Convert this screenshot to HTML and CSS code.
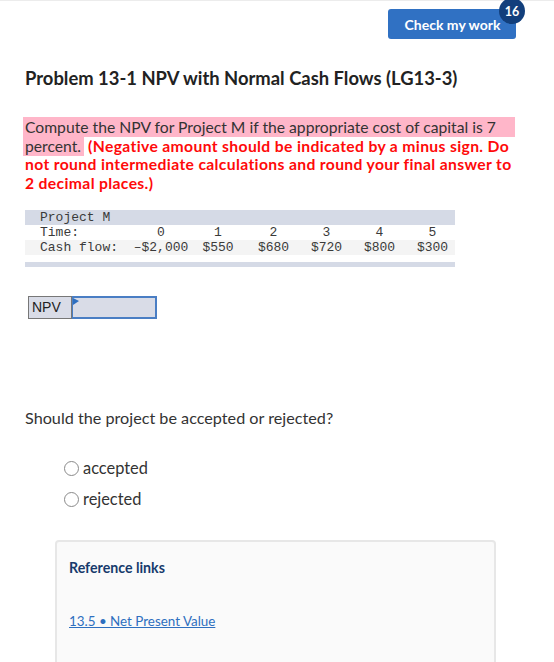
FILE: index.html
```html
<!DOCTYPE html>
<html>
<head>
<meta charset="utf-8">
<link rel="stylesheet" href="styles.css">
</head>
<body>
<div class="page">
  <div class="topbar">
    <button class="check">Check my work<span class="badge">16</span></button>
  </div>
  <h1 class="title">Problem 13-1 NPV with Normal Cash Flows (LG13-3)</h1>
  <p class="prompt"><span class="hl">Compute the NPV for Project M if the appropriate cost of capital is 7&nbsp;&nbsp;&nbsp;&nbsp; percent.</span> <strong class="red">(Negative amount should be indicated by a minus sign. Do not round intermediate calculations and round your final answer to 2 decimal places.)</strong></p>
  <div class="cf">
    <div class="cf-row cf-head"><span class="cf-label">Project M</span></div>
    <div class="cf-row">
      <span class="cf-label">Time:</span>
      <span>0</span><span>1</span><span>2</span><span>3</span><span>4</span><span>5</span>
    </div>
    <div class="cf-row cf-alt">
      <span class="cf-label">Cash flow:</span>
      <span>&ndash;$2,000</span><span>$550</span><span>$680</span><span>$720</span><span>$800</span><span>$300</span>
    </div>
    <div class="cf-foot"></div>
  </div>
  <div class="npv">
    <span class="npv-label">NPV</span>
    <span class="npv-input"><span class="flag"></span></span>
  </div>
  <p class="question">Should the project be accepted or rejected?</p>
  <div class="options">
    <label class="opt"><span class="radio"></span>accepted</label>
    <label class="opt"><span class="radio"></span>rejected</label>
  </div>
  <div class="refs">
    <div class="refs-title">Reference links</div>
    <a class="refs-link" href="#">13.5 &bull; Net Present Value</a>
  </div>
</div>
</body>
</html>
```
FILE: styles.css
```css
* { box-sizing: border-box; }
html, body { margin: 0; padding: 0; background: #fff; }
body {
  font-family: Lato, "Open Sans", sans-serif;
  color: #333;
  overflow: hidden;
  height: 662px;
}
.page {
  border-top: 1px solid #ececec;
  padding-left: 25px;
}
.topbar {
  display: flex;
  justify-content: flex-end;
  padding-top: 8px;
  padding-right: 38px;
}
.check {
  position: relative;
  width: 128px;
  height: 30px;
  border: none;
  border-radius: 3px;
  background: #3071c3;
  color: #fff;
  font-family: Lato, sans-serif;
  font-weight: 700;
  font-size: 14px;
  padding: 0 0 0 1px;
  text-align: center;
}
.badge {
  position: absolute;
  right: -9px;
  top: -11px;
  width: 26px;
  height: 26px;
  border-radius: 50%;
  background: #123f7c;
  color: #fff;
  font-size: 12.5px;
  font-weight: 700;
  display: flex;
  align-items: center;
  justify-content: center;
}
.title {
  margin: 27px 0 0 0;
  font-size: 18.4px;
  line-height: 25px;
  font-weight: 700;
  color: #222;
}
.prompt {
  margin: 27px 0 0 0;
  width: 494px;
  font-size: 15.7px;
  line-height: 18.5px;
}
.hl {
  background: #ffb6c9;
  padding: 1px 3px 1px 2px;
  margin-left: -2px;
  -webkit-box-decoration-break: clone;
  box-decoration-break: clone;
}
.red { color: #ff0a0a; font-weight: 700; letter-spacing: 0.35px; }
.cf {
  margin-top: 18px;
  width: 430px;
  font-family: "Liberation Mono", monospace;
  font-size: 13px;
  color: #3a3a3a;
}
.cf-row {
  display: grid;
  grid-template-columns: 93px 56px 58px 53px 53px 53px 53px;
  height: 15px;
  line-height: 15px;
  padding-left: 15px;
}
.cf-row span { text-align: center; white-space: nowrap; }
.cf-row .cf-label { text-align: left; }
.cf-head { background: #d5dae6; }
.cf-alt { background: #f4f4f4; }
.cf-foot {
  margin-top: 7px;
  height: 5px;
  background: #d5dae6;
}
.npv {
  display: flex;
  margin-top: 29px;
  margin-left: 3px;
  height: 23px;
}
.npv-label {
  width: 44px;
  border: 1px solid #777;
  background: #d9dce7;
  font-size: 14px;
  line-height: 21px;
  padding-left: 3px;
  color: #222;
  font-family: "Liberation Sans", Arial, sans-serif;
}
.npv-input {
  position: relative;
  width: 85px;
  border: 2px solid #4a7ec4;
  border-left-width: 1px;
  background: #d9dce7;
}
.flag {
  position: absolute;
  left: 0;
  top: 0;
  width: 0;
  height: 0;
  border-top: 3px solid transparent;
  border-bottom: 4px solid transparent;
  border-left: 6px solid #2d6fc0;
}
.question {
  margin: 89px 0 0 0;
  font-size: 16.2px;
  line-height: 20px;
}
.options {
  margin-top: 30px;
  margin-left: 39px;
  display: flex;
  flex-direction: column;
  gap: 11px;
}
.opt {
  display: flex;
  align-items: center;
  gap: 4px;
  font-size: 16.4px;
  line-height: 20px;
}
.radio {
  width: 15px;
  height: 15px;
  border-radius: 50%;
  border: 1px solid #8a8a8a;
  background: #fff;
}
.refs {
  margin-top: 31px;
  margin-left: 30px;
  width: 441px;
  height: 140px;
  border: 2px solid #e7e7e7;
  border-radius: 4px;
  background: #fafafa;
  padding: 17px 0 0 12px;
}
.refs-title {
  font-size: 14.2px;
  font-weight: 700;
  color: #173a6c;
}
.refs-link {
  display: inline-block;
  margin-top: 37px;
  font-size: 13.4px;
  color: #2e6fbf;
  text-decoration: underline;
}
```
